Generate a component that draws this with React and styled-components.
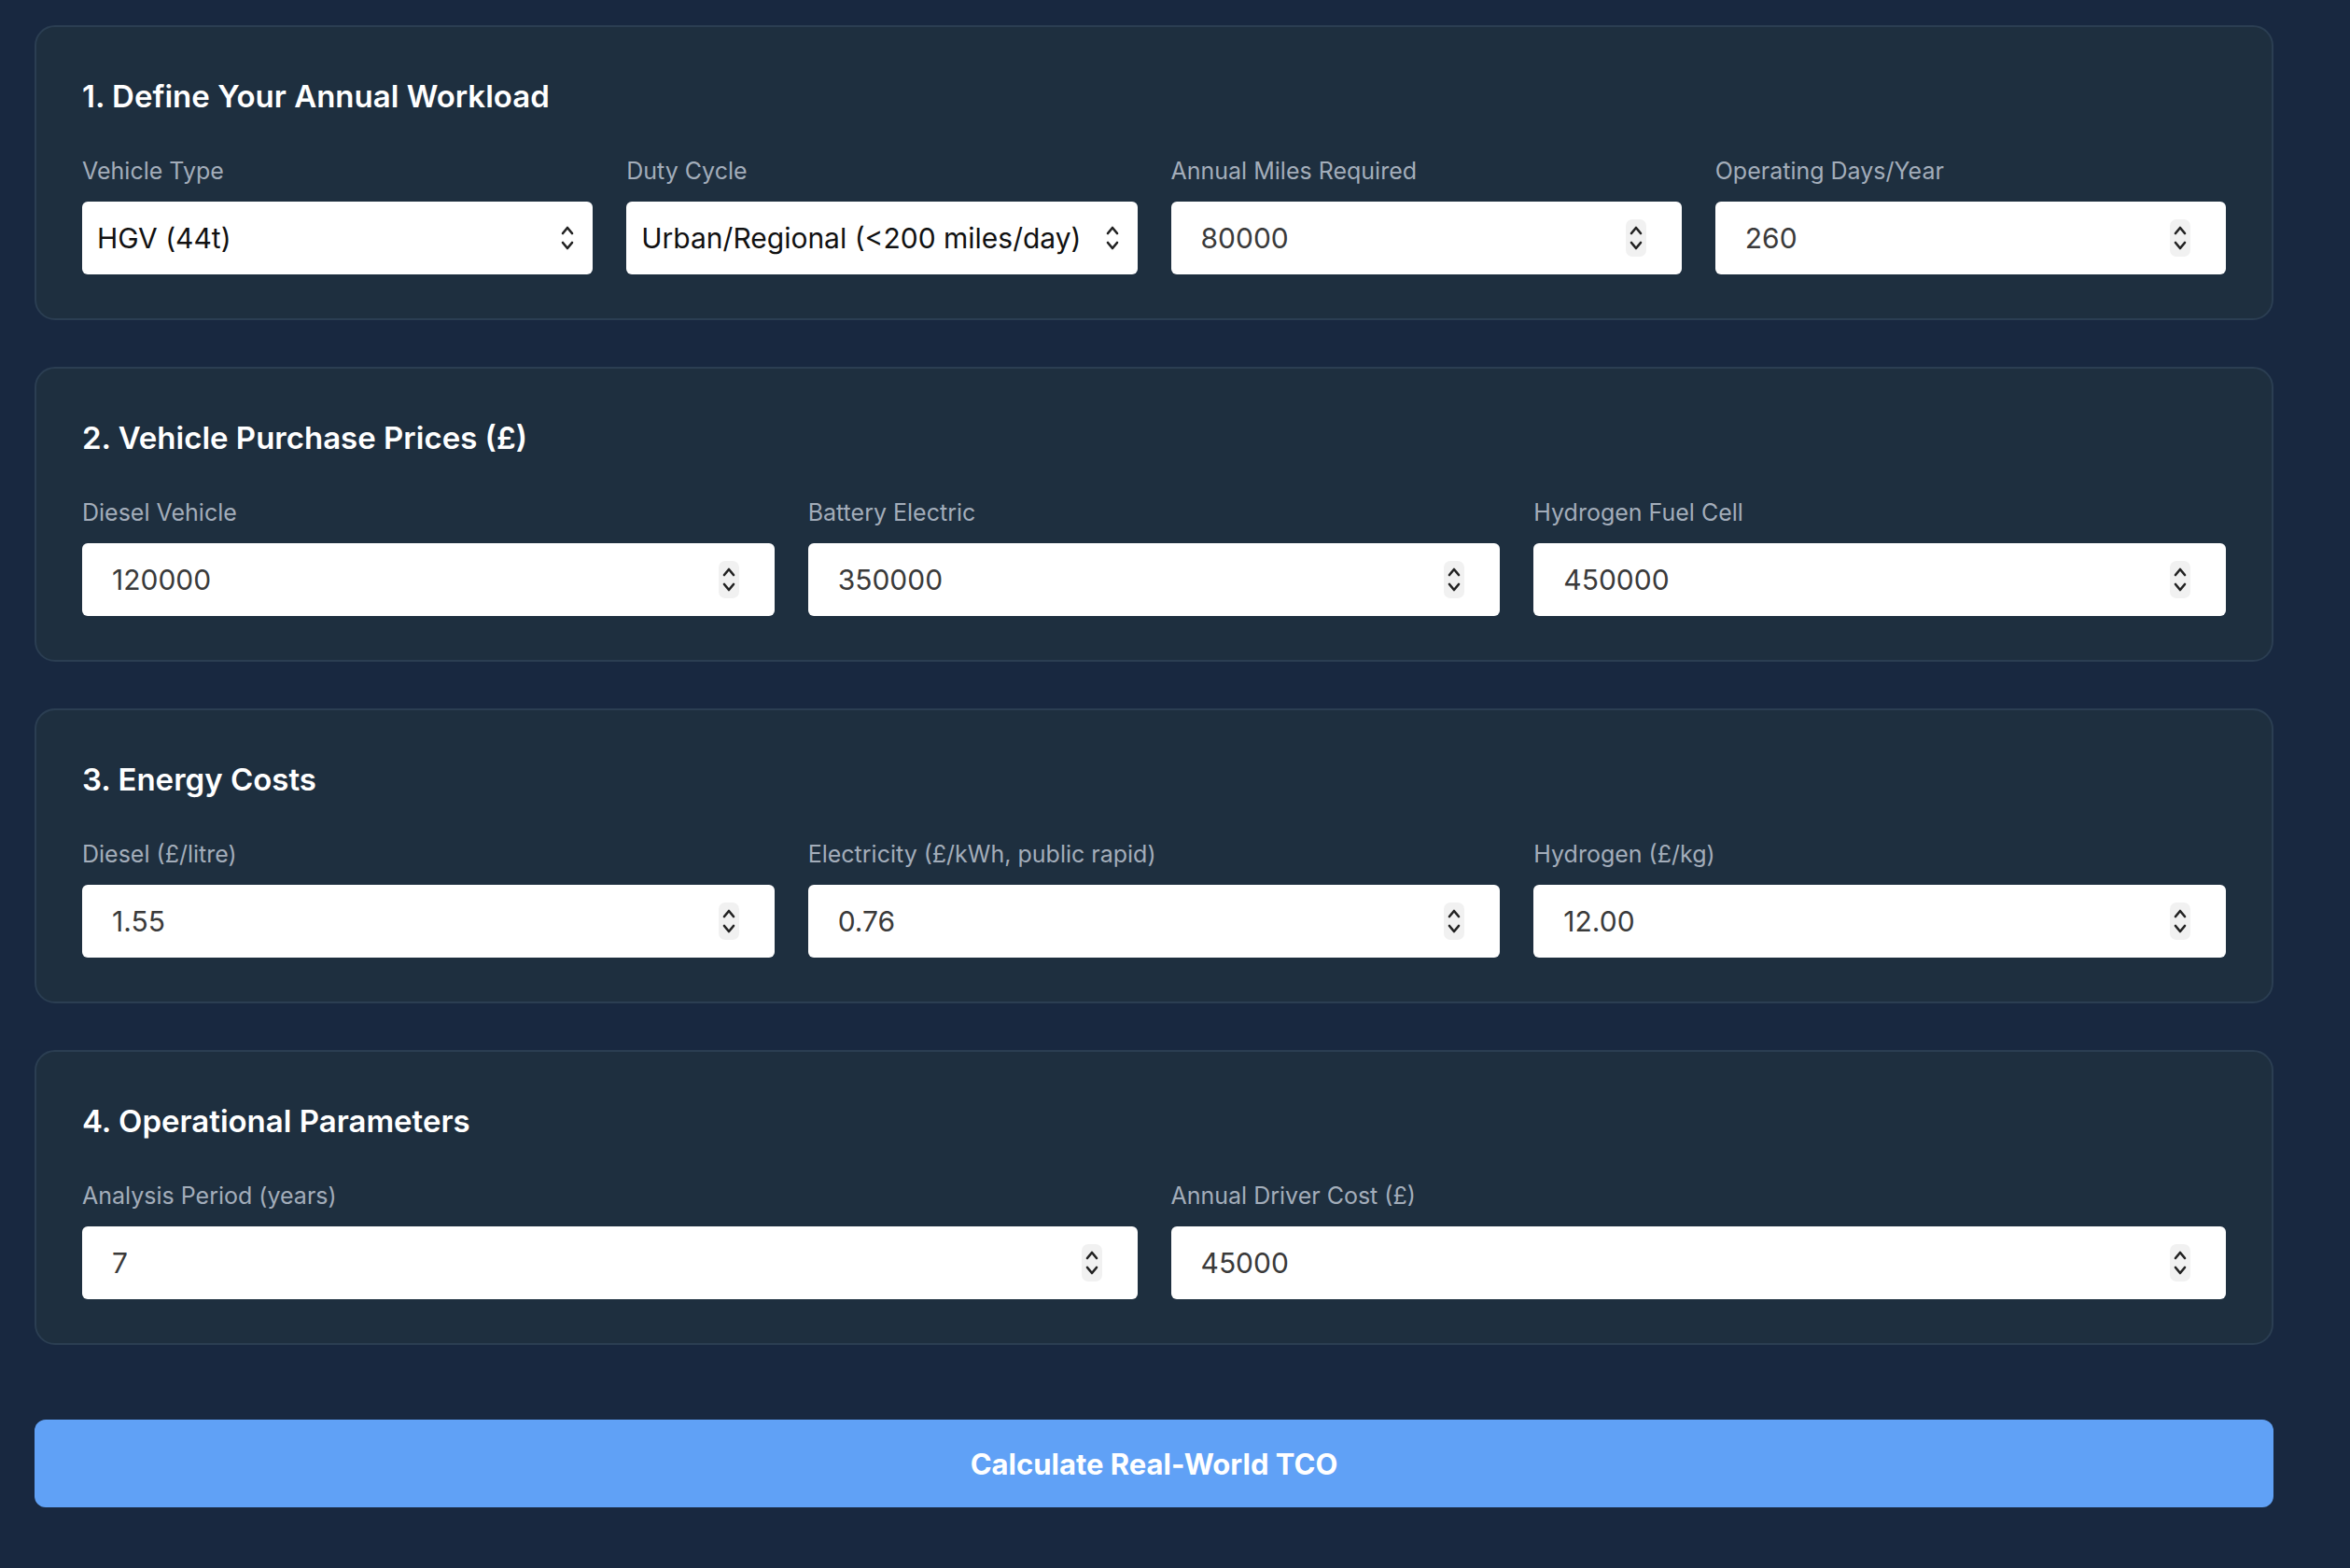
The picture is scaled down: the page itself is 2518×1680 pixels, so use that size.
import styled, { createGlobalStyle } from 'styled-components';

const Global = createGlobalStyle`
  body {
    margin: 0;
    background: #182840;
    font-family: Inter, "Noto Sans", sans-serif;
  }
`;

const Page = styled.div`
  width: 2399px;
  padding: 27px 0 60px 37px;
  display: flex;
  flex-direction: column;
  gap: 50px;
`;

const Panel = styled.section`
  background: #1e2f3f;
  border: 2px solid #2b3e52;
  border-radius: 22px;
  padding: 50px 49px 47px;
`;

const Title = styled.h2`
  margin: 0 0 38px;
  color: #fff;
  font-size: 33px;
  font-weight: 600;
  line-height: 48px;
`;

const Grid = styled.div`
  display: grid;
  grid-template-columns: repeat(${(p) => p.cols}, 1fr);
  gap: 36px;
`;

const Field = styled.label`
  display: flex;
  flex-direction: column;
  gap: 15px;
`;

const Label = styled.span`
  color: #a3adba;
  font-size: 25px;
  line-height: 36px;
`;

const Box = styled.div`
  height: 78px;
  box-sizing: border-box;
  background: #fff;
  border-radius: 6px;
  display: flex;
  align-items: center;
  padding: ${(p) => (p.select ? '0 16px 0 16px' : '0 38px 0 32px')};
`;

const Value = styled.span`
  flex: 1;
  font-size: 30px;
  color: ${(p) => (p.select ? '#111' : '#3a3a3a')};
`;

const Spin = styled.div`
  display: flex;
  align-items: center;
  justify-content: center;
  width: 22px;
  height: 40px;
  border-radius: 7px;
  background: ${(p) => (p.select ? 'transparent' : '#f1f1f1')};
`;

const Button = styled.button`
  margin-top: 30px;
  height: 94px;
  border: none;
  border-radius: 12px;
  background: #60a1f6;
  color: #fff;
  font-family: Inter, "Noto Sans", sans-serif;
  font-size: 31px;
  font-weight: 700;
`;

const Arrows = () => (
  <svg width="18" height="34" viewBox="0 0 18 34" fill="none" stroke="#222" strokeWidth="2.6" strokeLinecap="round" strokeLinejoin="round">
    <path d="M4 12 L9 6 L14 12" />
    <path d="M4 22 L9 28 L14 22" />
  </svg>
);

const Input = ({ label, value, select }) => (
  <Field>
    <Label>{label}</Label>
    <Box select={select}>
      <Value select={select}>{value}</Value>
      <Spin select={select}><Arrows /></Spin>
    </Box>
  </Field>
);

const sections = [
  {
    title: '1. Define Your Annual Workload',
    cols: 4,
    fields: [
      ['Vehicle Type', 'HGV (44t)', true],
      ['Duty Cycle', 'Urban/Regional (<200 miles/day)', true],
      ['Annual Miles Required', '80000'],
      ['Operating Days/Year', '260'],
    ],
  },
  {
    title: '2. Vehicle Purchase Prices (£)',
    cols: 3,
    fields: [
      ['Diesel Vehicle', '120000'],
      ['Battery Electric', '350000'],
      ['Hydrogen Fuel Cell', '450000'],
    ],
  },
  {
    title: '3. Energy Costs',
    cols: 3,
    fields: [
      ['Diesel (£/litre)', '1.55'],
      ['Electricity (£/kWh, public rapid)', '0.76'],
      ['Hydrogen (£/kg)', '12.00'],
    ],
  },
  {
    title: '4. Operational Parameters',
    cols: 2,
    fields: [
      ['Analysis Period (years)', '7'],
      ['Annual Driver Cost (£)', '45000'],
    ],
  },
];

export default function App() {
  return (
    <>
      <Global />
      <Page>
        {sections.map((s) => (
          <Panel key={s.title}>
            <Title>{s.title}</Title>
            <Grid cols={s.cols}>
              {s.fields.map(([l, v, sel]) => (
                <Input key={l} label={l} value={v} select={sel} />
              ))}
            </Grid>
          </Panel>
        ))}
        <Button>Calculate Real-World TCO</Button>
      </Page>
    </>
  );
}
